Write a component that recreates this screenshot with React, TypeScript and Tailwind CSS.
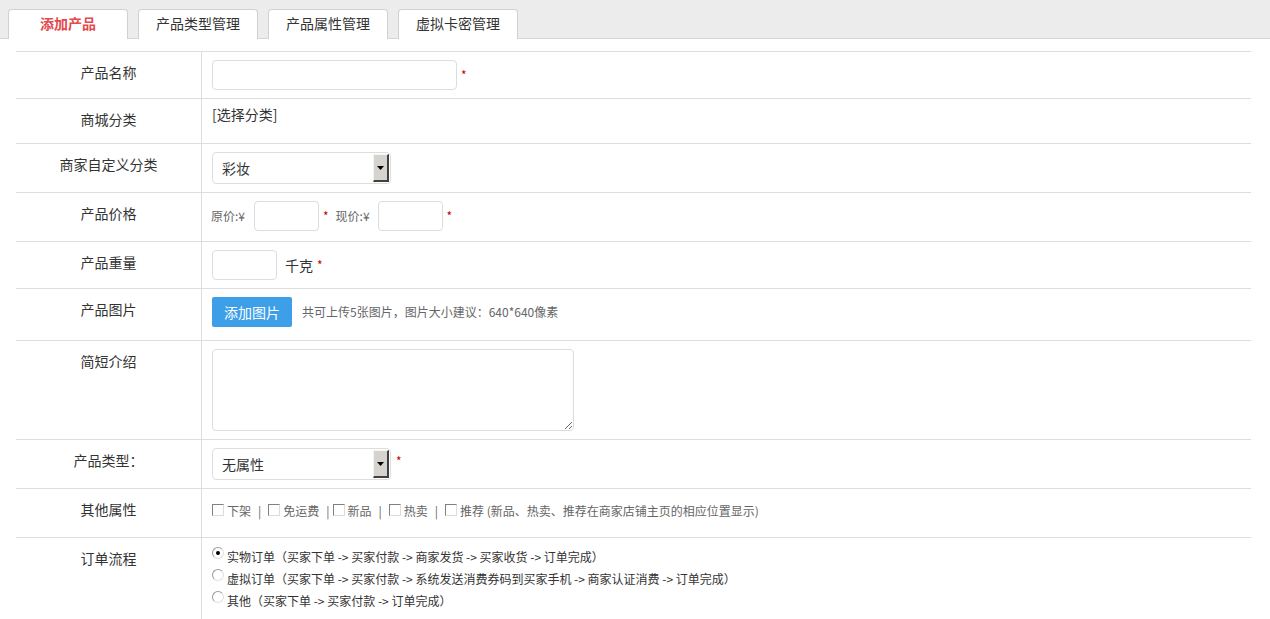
import React from 'react'

const font = "font-['SimSun','Noto_Sans_CJK_SC',sans-serif]"

const tabs = ['添加产品', '产品类型管理', '产品属性管理', '虚拟卡密管理']

const Star = () => <span className='text-[12px] text-[#cc0000] ml-[4px]'>*</span>

const Select = ({ value }: { value: string }) => (
  <div className='flex w-[179px] h-[32px] border border-[#dddddd] rounded-[4px] bg-white overflow-hidden'>
    <div className='flex-1 flex items-center pl-[9px] text-[14px] text-[#333]'>{value}</div>
    <div className='w-[16px] my-[1px] mr-[1px] flex items-center justify-center bg-[#d6d3ce] border-l border-t border-l-[#f4f4f4] border-t-[#f4f4f4] border-r-2 border-b-2 border-r-[#404040] border-b-[#404040]'>
      <svg width='7' height='4' viewBox='0 0 7 4'>
        <path d='M0 0h7L3.5 4z' fill='#000' />
      </svg>
    </div>
  </div>
)

const Check = () => (
  <span className='inline-block w-[12px] h-[12px] border border-t-[#808080] border-l-[#808080] border-r-[#dcdcdc] border-b-[#dcdcdc] bg-white align-top mt-[1px] mr-[3px]' />
)

const Radio = ({ on }: { on?: boolean }) => (
  <span className='inline-flex w-[12px] h-[12px] rounded-full border border-[#9a9a9a] border-r-[#e0e0e0] border-b-[#e0e0e0] bg-white items-center justify-center align-top mt-[1px] mr-[3px]'>
    {on && <span className='w-[4px] h-[4px] rounded-full bg-black' />}
  </span>
)

const Row = ({ label, h, children, contentCls = '' }: { label: string; h: string; children?: React.ReactNode; contentCls?: string }) => (
  <div className={`flex border-t border-[#dddddd] ${h}`}>
    <div className='w-[185px] shrink-0 text-center text-[14px] leading-[20px] text-[#333] pt-[10px]'>{label}</div>
    <div className={`flex-1 border-l border-[#dddddd] pl-[10px] ${contentCls}`}>{children}</div>
  </div>
)

const inputCls = 'border border-[#dddddd] rounded-[4px] bg-white h-[30px]'

export default function App() {
  return (
    <div className={`${font} bg-white w-[1270px] h-[619px] overflow-hidden`}>
      <div className='h-[39px] bg-[#ececec] border-b border-[#d6d6d6] flex items-end gap-[10px] pl-[8px]'>
        {tabs.map((t, i) => (
          <div
            key={t}
            className={`w-[120px] h-[30px] -mb-px pb-[3px] bg-white border border-[#d0d0d0] border-b-0 rounded-t-[4px] flex items-center justify-center text-[14px] ${i === 0 ? 'text-[#e5484d] font-bold' : 'text-[#333]'}`}
          >
            {t}
          </div>
        ))}
      </div>

      <div className='mt-[12px] ml-[16px] w-[1235px]'>
        <Row label='产品名称' h='h-[47px]' contentCls='pt-[8px]'>
          <div className='flex items-center'>
            <div className={`${inputCls} w-[245px]`} />
            <Star />
          </div>
        </Row>
        <Row label='商城分类' h='h-[45px]' contentCls='pt-[2px]'>
          <span className='text-[14px] leading-[20px] text-[#333]'>[选择分类]</span>
        </Row>
        <Row label='商家自定义分类' h='h-[49px]' contentCls='pt-[8px]'>
          <Select value='彩妆' />
        </Row>
        <Row label='产品价格' h='h-[49px]' contentCls='pt-[8px]'>
          <div className='flex items-center text-[12px] text-[#666]'>
            <span className='-ml-px'>原价:¥</span>
            <div className={`${inputCls} w-[65px] ml-[9px]`} />
            <Star />
            <span className='ml-[7px]'>现价:¥</span>
            <div className={`${inputCls} w-[65px] ml-[8px]`} />
            <Star />
          </div>
        </Row>
        <Row label='产品重量' h='h-[47px]' contentCls='pt-[8px]'>
          <div className='flex items-center'>
            <div className={`${inputCls} w-[65px]`} />
            <span className='ml-[8px] text-[14px] text-[#333]'>千克</span>
            <Star />
          </div>
        </Row>
        <Row label='产品图片' h='h-[52px]' contentCls='pt-[8px]'>
          <div className='flex items-center'>
            <div className='w-[80px] h-[30px] rounded-[2px] bg-[#3d9fe8] text-white text-[14px] flex items-center justify-center'>添加图片</div>
            <span className='ml-[10px] text-[12px] text-[#666]'>共可上传5张图片，图片大小建议：640*640像素</span>
          </div>
        </Row>
        <Row label='简短介绍' h='h-[99px]' contentCls='pt-[8px]'>
          <textarea className='block w-[362px] h-[82px] border border-[#dddddd] rounded-[4px] outline-none' />
        </Row>
        <Row label='产品类型：' h='h-[49px]' contentCls='pt-[8px]'>
          <div className='flex items-start'>
            <Select value='无属性' />
            <span className='text-[12px] text-[#cc0000] ml-[5px] mt-[4px]'>*</span>
          </div>
        </Row>
        <Row label='其他属性' h='h-[49px]' contentCls='pt-[14px]'>
          <div className='text-[12px] leading-[16px] text-[#666] whitespace-nowrap'>
            <Check />下架<span className='mx-[7px]'>|</span>
            <Check />免运费<span className='ml-[7px] mr-[3px]'>|</span>
            <Check />新品<span className='mx-[7px]'>|</span>
            <Check />热卖<span className='mx-[7px]'>|</span>
            <Check />推荐 (新品、热卖、推荐在商家店铺主页的相应位置显示)
          </div>
        </Row>
        <Row label='订单流程' h='h-[90px]' contentCls='pt-[8px]'>
          <div className='text-[12px] leading-[22px] text-[#333] whitespace-nowrap'>
            <div><Radio on />实物订单（买家下单 -&gt; 买家付款 -&gt; 商家发货 -&gt; 买家收货 -&gt; 订单完成）</div>
            <div><Radio />虚拟订单（买家下单 -&gt; 买家付款 -&gt; 系统发送消费券码到买家手机 -&gt; 商家认证消费 -&gt; 订单完成）</div>
            <div><Radio />其他（买家下单 -&gt; 买家付款 -&gt; 订单完成）</div>
          </div>
        </Row>
      </div>
    </div>
  )
}
